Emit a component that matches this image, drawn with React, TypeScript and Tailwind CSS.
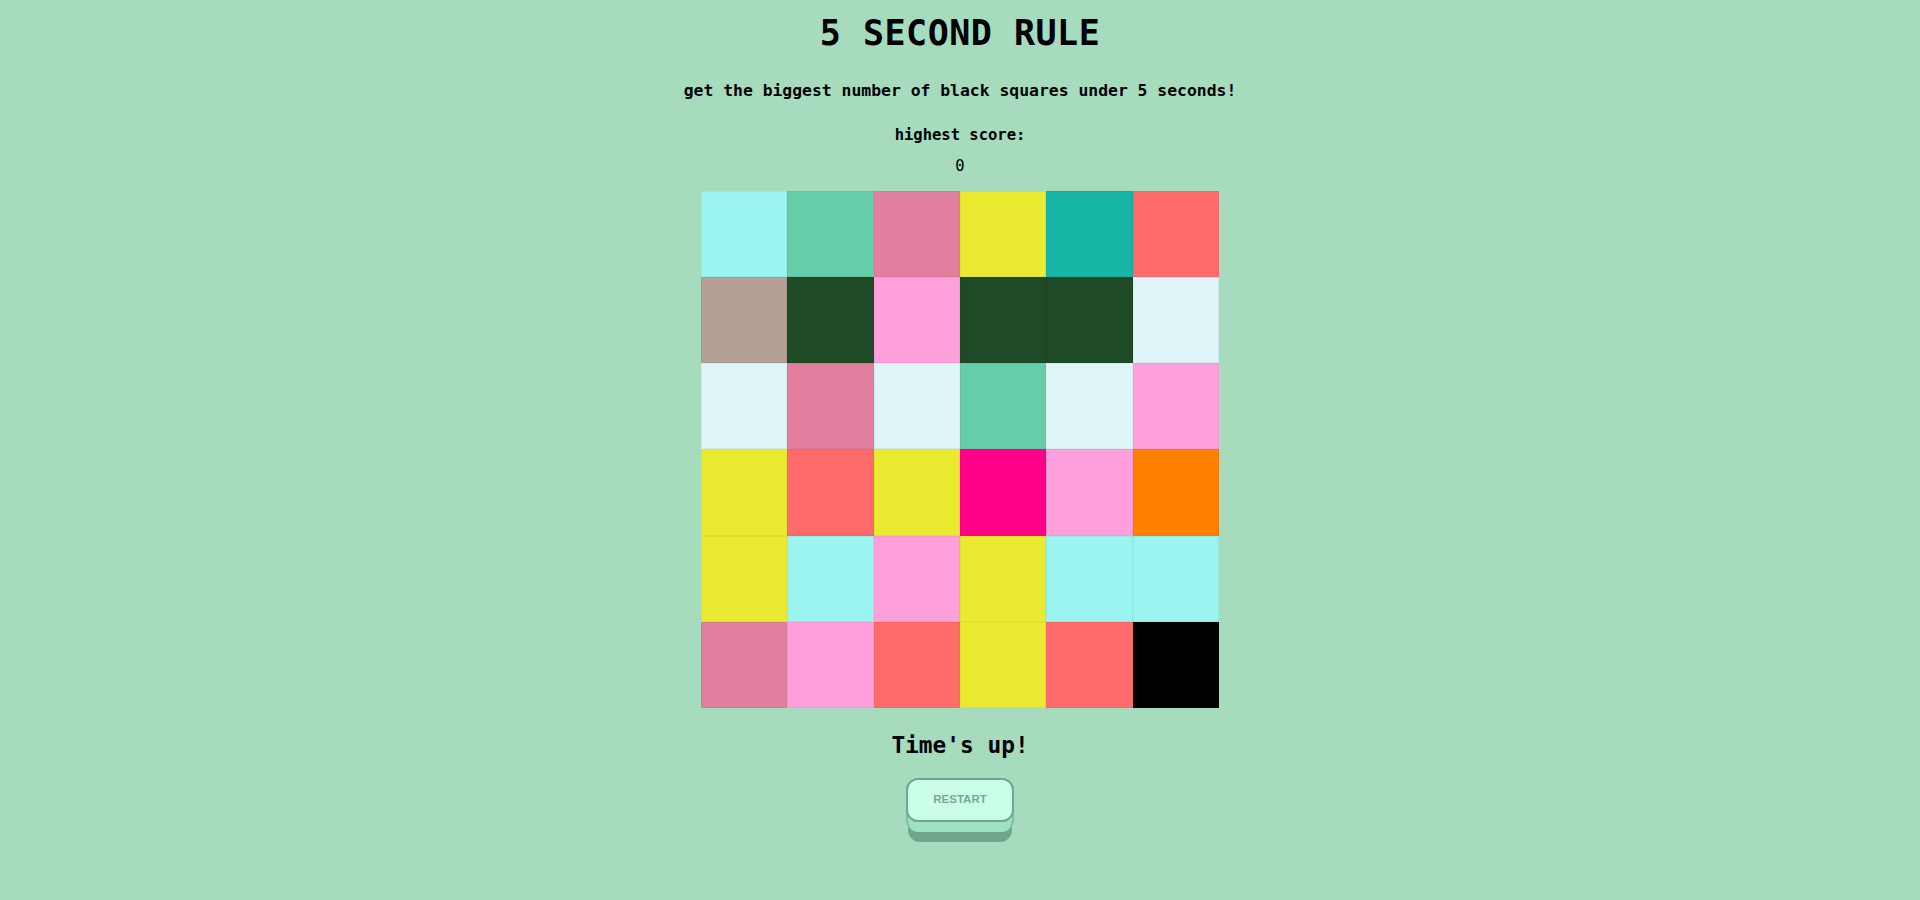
import React from "react";

const C = {
  cy: "bg-[#9bf4f0]",
  aq: "bg-[#66cdaa]",
  pk: "bg-[#e27f9f]",
  ye: "bg-[#eaea30]",
  te: "bg-[#17b5a5]",
  rd: "bg-[#ff6b6b]",
  ta: "bg-[#b5a098]",
  dg: "bg-[#1e4a26]",
  lp: "bg-[#ffa0dc]",
  lc: "bg-[#e0f5f8]",
  hp: "bg-[#ff0088]",
  or: "bg-[#ff8000]",
  bk: "bg-[#000000]",
};

const rows: (keyof typeof C)[][] = [
  ["cy", "aq", "pk", "ye", "te", "rd"],
  ["ta", "dg", "lp", "dg", "dg", "lc"],
  ["lc", "pk", "lc", "aq", "lc", "lp"],
  ["ye", "rd", "ye", "hp", "lp", "or"],
  ["ye", "cy", "lp", "ye", "cy", "cy"],
  ["pk", "lp", "rd", "ye", "rd", "bk"],
];

export default function App() {
  return (
    <div
      className="min-h-[900px] w-full bg-[#a6dbbd] text-black flex flex-col items-center"
      style={{ fontFamily: '"DejaVu Sans Mono", "Liberation Mono", monospace' }}
    >
      <h1 className="mt-[11px] text-[35px] leading-[44px] font-bold tracking-[0.5px]">5 SECOND RULE</h1>
      <p className="mt-[26px] text-[16.4px] leading-[20px] font-bold">
        get the biggest number of black squares under 5 seconds!
      </p>
      <p className="mt-[25px] text-[15.5px] leading-[18px] font-bold">highest score:</p>
      <p className="mt-[13px] text-[15.5px] leading-[18px]">0</p>
      <div className="mt-[16px] grid grid-cols-6 w-[518px] h-[517px]">
        {rows.flat().map((k, i) => (
          <div key={i} className={`${C[k]} border border-black/[0.04]`} />
        ))}
      </div>
      <p className="mt-[23px] text-[22.8px] leading-[28px] font-bold">Time's up!</p>
      <div className="mt-[19px] relative w-[108px] h-[64px]">
        <div className="absolute left-[2px] right-[2px] top-[20px] bottom-0 rounded-[12px] bg-[#6fa68c]" />
        <div className="absolute left-0 right-0 top-[16px] h-[38px] rounded-[12px] bg-[#9de3c3] border-x-2 border-b-0 border-[#7fbfa0]" />
        <button
          className="absolute left-0 top-0 w-[108px] h-[44px] rounded-[12px] border-2 border-[#6fa68c] bg-[#ccffe9] text-[#76a88f] text-[11.5px] font-bold"
          style={{ fontFamily: '"Liberation Sans", Arial, sans-serif' }}
        >
          RESTART
        </button>
      </div>
    </div>
  );
}
